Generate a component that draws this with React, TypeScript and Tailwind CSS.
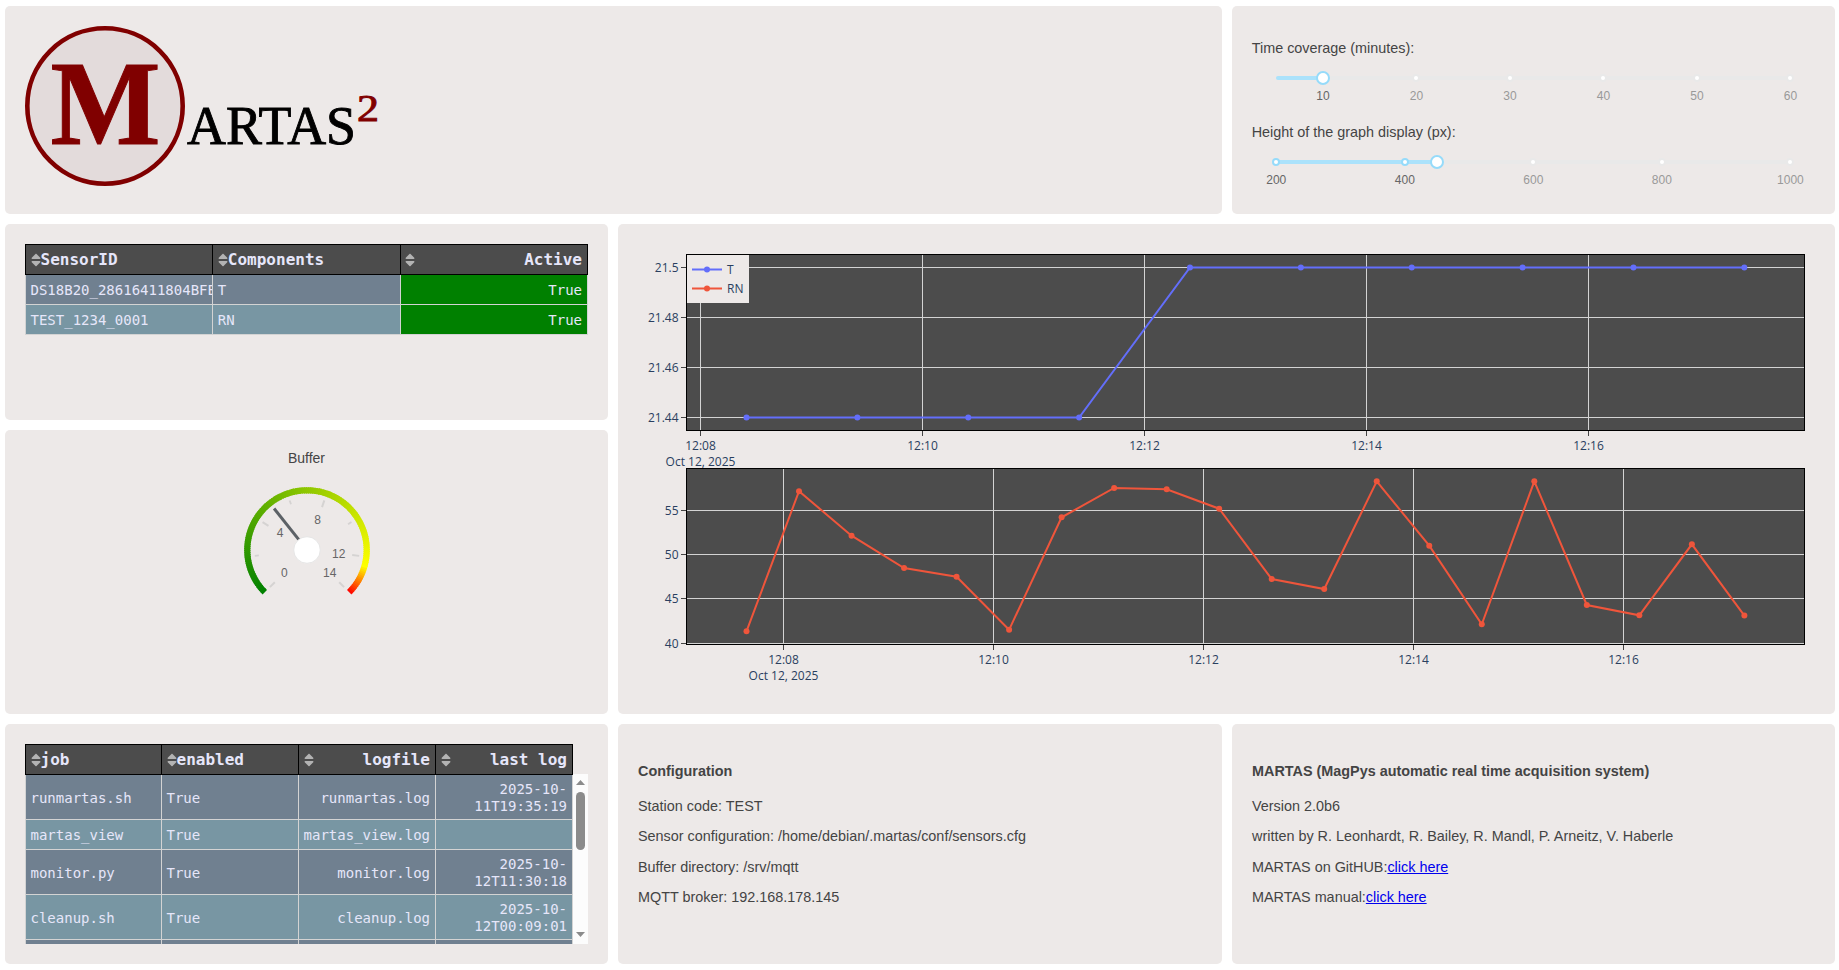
import type { ReactNode } from "react";
import { FaSort } from "react-icons/fa";

function Card({ className = "", children }: { className?: string; children: ReactNode }) {
  return <section className={`rounded-[5px] bg-[#ede9e8] ${className}`}>{children}</section>;
}

function Logo() {
  return (
    <svg width="360" height="168" viewBox="25 26 360 168" className="block" fontFamily="'Liberation Serif', serif">
      <circle cx="105" cy="106" r="77.7" fill="#e3dbdb" stroke="#800000" strokeWidth="4.6" />
      <text x="50.5" y="143.5" fontSize="121" fontWeight="700" fill="#800000" stroke="#800000" strokeWidth="1" textLength="110" lengthAdjust="spacingAndGlyphs">
        M
      </text>
      <text x="187" y="144" fontSize="54" fill="#000" stroke="#000" strokeWidth="0.9" textLength="169" lengthAdjust="spacingAndGlyphs">
        ARTAS
      </text>
      <text x="357" y="121" fontSize="37" fill="#800000" stroke="#800000" strokeWidth="0.9" textLength="22" lengthAdjust="spacingAndGlyphs">
        2
      </text>
    </svg>
  );
}

type SliderProps = { min: number; max: number; value: number; marks: number[] };

function Slider({ min, max, value, marks }: SliderProps) {
  const pct = (v: number) => `${((v - min) / (max - min)) * 100}%`;
  return (
    <div className="px-[24.6px]">
      <div className="relative h-[32px]">
        <div className="absolute top-[5px] h-1 w-full rounded-md bg-[#e9e9e9]" />
        <div className="absolute top-[5px] h-1 rounded-md bg-[#abe2fb]" style={{ width: pct(value) }} />
        {marks.map((m) => (
          <div key={m}>
            <span
              className={`absolute top-[3px] size-2 -translate-x-1/2 rounded-full border-2 bg-white ${m <= value ? "border-[#96dbfa]" : "border-[#e9e9e9]"}`}
              style={{ left: pct(m) }}
            />
            <span
              className={`absolute top-[18px] -translate-x-1/2 text-[12px] leading-[15px] ${m <= value ? "text-[#666]" : "text-[#999]"}`}
              style={{ left: pct(m) }}
            >
              {m}
            </span>
          </div>
        ))}
        <span
          className="absolute top-0 size-[14px] -translate-x-1/2 rounded-full border-2 border-[#96dbfa] bg-white"
          style={{ left: pct(value) }}
        />
      </div>
    </div>
  );
}

type Column = { name: string; right?: boolean };

function HeaderRow({ columns }: { columns: Column[] }) {
  return (
    <tr className="h-[30px]">
      {columns.map((c) => (
        <th key={c.name} className="border border-black bg-[#4c4c4c] py-0 pr-[5px] pl-[4.5px] text-[16px] font-bold leading-[20px]">
          <div className="flex items-center">
            <FaSort className="h-4 w-[10px] shrink-0 text-[#b3b3b3]" />
            <span className={`flex-1 whitespace-pre ${c.right ? "text-right" : "text-left"}`}>{c.name}</span>
          </div>
        </th>
      ))}
    </tr>
  );
}

function SensorTable() {
  const rows = [
    ["DS18B20_28616411804BFE", "T", "True"],
    ["TEST_1234_0001", "RN", "True"],
  ];
  return (
    <table className="w-[563px] table-fixed border-collapse font-['DejaVu_Sans_Mono',monospace] text-[14px] text-[#e6e6fa]">
      <thead>
        <HeaderRow columns={[{ name: "SensorID" }, { name: "Components" }, { name: "Active", right: true }]} />
      </thead>
      <tbody>
        {rows.map((r, i) => (
          <tr key={r[0]} className={`h-[30px] ${i % 2 ? "bg-[#7896a3]" : "bg-[#708090]"}`}>
            {r.map((v, j) => (
              <td
                key={j}
                className={`overflow-hidden border border-[#d3d3d3] pt-[2px] pr-[5px] pb-0 pl-[4.5px] leading-[17px] whitespace-nowrap ${j === 2 ? "bg-[#008000] text-right" : ""}`}
              >
                {v}
              </td>
            ))}
          </tr>
        ))}
      </tbody>
    </table>
  );
}

function JobTable() {
  const rows = [
    ["runmartas.sh", "True", "runmartas.log", "2025-10-11T19:35:19"],
    ["martas_view", "True", "martas_view.log", ""],
    ["monitor.py", "True", "monitor.log", "2025-10-12T11:30:18"],
    ["cleanup.sh", "True", "cleanup.log", "2025-10-12T00:09:01"],
    ["", "", "", ""],
  ];
  return (
    <div className="flex h-[200px] overflow-hidden">
      <table className="w-[548px] shrink-0 table-fixed self-start border-collapse font-['DejaVu_Sans_Mono',monospace] text-[14px] text-[#e6e6fa]">
        <colgroup>
          <col className="w-[136px]" />
          <col className="w-[137px]" />
          <col className="w-[137px]" />
          <col />
        </colgroup>
        <thead>
          <HeaderRow
            columns={[{ name: "job" }, { name: "enabled" }, { name: "logfile", right: true }, { name: "last log", right: true }]}
          />
        </thead>
        <tbody>
          {rows.map((r, i) => (
            <tr key={i} className={`${r[3] ? "h-[45px]" : "h-[30px]"} ${i % 2 ? "bg-[#7896a3]" : "bg-[#708090]"}`}>
              {r.map((v, j) => (
                <td key={j} className={`border border-[#d3d3d3] pt-[2px] pr-[5px] pb-0 pl-[4.5px] leading-[17px] ${j > 1 ? "text-right" : ""}`}>
                  {v}
                </td>
              ))}
            </tr>
          ))}
        </tbody>
      </table>
      <div className="mt-[30px] flex w-[15px] flex-col items-center bg-[#fcfcfc]">
        <svg width="15" height="18" className="block shrink-0">
          <path d="M3 11 L7.5 6 L12 11 Z" fill="#8b8b8b" />
        </svg>
        <div className="h-[58px] w-[9px] rounded-full bg-[#8b8b8b]" />
        <svg width="15" height="18" className="mt-auto block shrink-0">
          <path d="M3 6 L7.5 11 L12 6 Z" fill="#8b8b8b" />
        </svg>
      </div>
    </div>
  );
}

const polar = (r: number, deg: number) => {
  const a = ((deg + 135) * Math.PI) / 180;
  return [75 + r * Math.cos(a), 75 + r * Math.sin(a)] as const;
};

const gaugeColor = (deg: number) =>
  deg < 241
    ? `rgb(${(255 * deg) / 241}, ${128 + (127 * deg) / 241}, 0)`
    : `rgb(255, ${255 * (1 - (deg - 241) / 29)}, 0)`;

function Gauge() {
  const labels: [string, number, number][] = [
    ["0", 52.3, 97.7],
    ["4", 48, 57.7],
    ["8", 85.7, 44.7],
    ["12", 106.7, 78.7],
    ["14", 97.7, 97.7],
  ];
  const [nx1, ny1] = polar(10, 96.6);
  const [nx2, ny2] = polar(53, 96.6);
  return (
    <svg width="150" height="150" viewBox="0 0 150 150" className="block">
      {Array.from({ length: 135 }, (_, i) => {
        const [x1, y1] = polar(59.7, i * 2);
        const [x2, y2] = polar(59.7, Math.min(i * 2 + 3, 270));
        return <path key={i} d={`M${x1} ${y1}A59.7 59.7 0 0 1 ${x2} ${y2}`} stroke={gaugeColor(i * 2 + 1)} strokeWidth="6.2" fill="none" />;
      })}
      {[0, 1, 2, 3, 4, 5, 6, 7].map((i) => {
        const long = i % 2 === 0 || i === 7;
        const [x1, y1] = polar(long ? 45.5 : 48.5, (i * 270) / 7);
        const [x2, y2] = polar(52.5, (i * 270) / 7);
        return <line key={i} x1={x1} y1={y1} x2={x2} y2={y2} stroke="#d5d3d2" strokeWidth={long ? 2 : 1.8} />;
      })}
      {labels.map(([t, x, y]) => (
        <text key={t} x={x} y={y + 4.3} textAnchor="middle" fontSize="12" fill="#666" fontFamily="'Liberation Sans', sans-serif">
          {t}
        </text>
      ))}
      <line x1={nx1} y1={ny1} x2={nx2} y2={ny2} stroke="#5c6166" strokeWidth="3" />
      <circle cx="75" cy="75" r="13.3" fill="#fff" stroke="#e6e6e6" strokeWidth="1" />
    </svg>
  );
}

type PlotProps = {
  top: number;
  xTicks: number[];
  yTicks: [string, number][];
  points: [number, number][];
  color: string;
};

const X_LABELS = ["12:08", "12:10", "12:12", "12:14", "12:16"];

function Plot({ top, xTicks, yTicks, points, color }: PlotProps) {
  const bottom = top + 176;
  return (
    <g>
      <rect x="686.5" y={top} width="1118" height="176" fill="#4c4c4c" />
      {xTicks.map((x) => (
        <line key={x} x1={x} x2={x} y1={top} y2={bottom} stroke="#d3d3d3" />
      ))}
      {yTicks.map(([, y]) => (
        <line key={y} x1="686.5" x2="1804.5" y1={y} y2={y} stroke="#d3d3d3" />
      ))}
      <rect x="686.5" y={top} width="1118" height="176" fill="none" stroke="#000" />
      <polyline points={points.map((p) => p.join(",")).join(" ")} fill="none" stroke={color} strokeWidth="2" />
      {points.map(([x, y]) => (
        <circle key={x} cx={x} cy={y} r="3" fill={color} />
      ))}
      {xTicks.map((x, i) => (
        <g key={x}>
          <line x1={x} x2={x} y1={bottom + 0.5} y2={bottom + 5.5} stroke="#444" />
          <text x={x} y={bottom + 19.5} textAnchor="middle">
            {X_LABELS[i]}
          </text>
        </g>
      ))}
      <text x={xTicks[0]} y={bottom + 35.5} textAnchor="middle">
        Oct 12, 2025
      </text>
      {yTicks.map(([t, y]) => (
        <g key={t}>
          <line x1="681" x2="686" y1={y} y2={y} stroke="#444" />
          <text x="678.6" y={y + 4.2} textAnchor="end">
            {t}
          </text>
        </g>
      ))}
    </g>
  );
}

const RN_Y = [
  631.3, 491.2, 535.7, 568, 576.7, 629.8, 517.3, 488, 489.3, 508.7, 579, 589, 481.3, 545.7, 624.3, 481.3, 605, 615.3, 544.3, 615.6,
];
const T_Y = [417.5, 417.5, 417.5, 417.5, 267.5, 267.5, 267.5, 267.5, 267.5, 267.5];

function Charts() {
  const t = T_Y.map((y, i) => [746.5 + i * 110.87, y] as [number, number]);
  const rn = RN_Y.map((y, i) => [746.5 + i * 52.52, y] as [number, number]);
  return (
    <svg width="1217" height="490" viewBox="618 224 1217 490" className="block" fontFamily="'Open Sans', sans-serif" fontSize="12" fill="#2a3f5f">
      <Plot
        top={254.5}
        xTicks={[700.5, 922.5, 1144.5, 1366.5, 1588.5]}
        yTicks={[["21.5", 267.5], ["21.48", 317.5], ["21.46", 367.5], ["21.44", 417.5]]}
        points={t}
        color="#636efa"
      />
      <rect x="687" y="255" width="62" height="48" fill="#ede9e8" />
      <path d="M692 269.5H722" stroke="#636efa" strokeWidth="2" />
      <circle cx="707" cy="269.5" r="3" fill="#636efa" />
      <text x="727" y="273.7">T</text>
      <path d="M692 288.5H722" stroke="#ef553b" strokeWidth="2" />
      <circle cx="707" cy="288.5" r="3" fill="#ef553b" />
      <text x="727" y="292.7">RN</text>
      <Plot
        top={468.5}
        xTicks={[783.5, 993.5, 1203.5, 1413.5, 1623.5]}
        yTicks={[["55", 510.5], ["50", 554.5], ["45", 598.5], ["40", 643.5]]}
        points={rn}
        color="#ef553b"
      />
    </svg>
  );
}

function Info({ title, children }: { title: string; children: ReactNode }) {
  return (
    <Card className="px-5 pt-[39px]">
      <h4 className="mb-[18.6px] text-[14.4px] font-bold leading-[16.4px]">{title}</h4>
      <div className="flex flex-col gap-[14px] text-[14.4px] leading-[16.4px]">{children}</div>
    </Card>
  );
}

function Link() {
  return (
    <a href="#" className="text-[#0000ee] underline">
      click here
    </a>
  );
}

export default function App() {
  return (
    <main className="grid h-[970px] w-[1839px] grid-cols-[603px_604px_603px] grid-rows-[208px_196px_284px_240px] gap-[10px] overflow-hidden bg-white px-[5px] pt-[6px] font-['Liberation_Sans',Arial,sans-serif] text-[#444]">
      <Card className="col-span-2 p-5">
        <Logo />
      </Card>
      <Card className="pt-[34px] pr-5 pl-[19.7px]">
        <p className="mb-[14.6px] text-[14.4px] leading-[16.4px]">Time coverage (minutes):</p>
        <Slider min={5} max={60} value={10} marks={[10, 20, 30, 40, 50, 60]} />
        <p className="mt-[21px] mb-[14.6px] text-[14.4px] leading-[16.4px]">Height of the graph display (px):</p>
        <Slider min={200} max={1000} value={450} marks={[200, 400, 600, 800, 1000]} />
      </Card>

      <Card className="p-5">
        <SensorTable />
      </Card>
      <Card className="col-span-2 row-span-2">
        <Charts />
      </Card>
      <Card className="flex flex-col items-center pt-5">
        <p className="text-[14px] leading-4">Buffer</p>
        <div className="mt-[9px]">
          <Gauge />
        </div>
      </Card>

      <Card className="p-5">
        <JobTable />
      </Card>
      <Info title="Configuration">
        <p>Station code: TEST</p>
        <p>Sensor configuration: /home/debian/.martas/conf/sensors.cfg</p>
        <p>Buffer directory: /srv/mqtt</p>
        <p>MQTT broker: 192.168.178.145</p>
      </Info>
      <Info title="MARTAS (MagPys automatic real time acquisition system)">
        <p>Version 2.0b6</p>
        <p>written by R. Leonhardt, R. Bailey, R. Mandl, P. Arneitz, V. Haberle</p>
        <p>
          MARTAS on GitHUB:
          <Link />
        </p>
        <p>
          MARTAS manual:
          <Link />
        </p>
      </Info>
    </main>
  );
}
